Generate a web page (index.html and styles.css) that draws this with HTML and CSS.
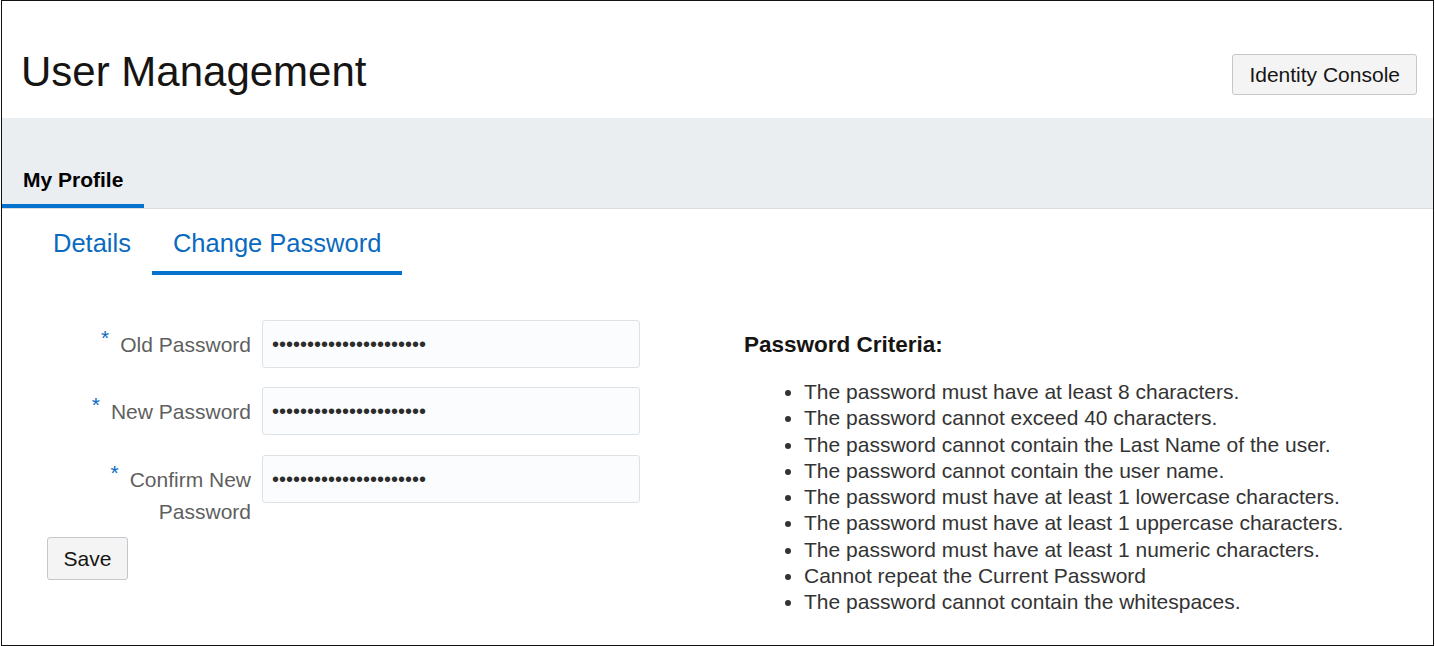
FILE: index.html
```html
<!DOCTYPE html>
<html lang="en">
<head>
<meta charset="utf-8">
<title>User Management</title>
<link rel="stylesheet" href="styles.css">
</head>
<body>
<div class="frame">
  <header class="header">
    <h1 class="title">User Management</h1>
    <button class="btn btn-console" type="button">Identity Console</button>
  </header>

  <nav class="band">
    <div class="band-tab">My Profile</div>
  </nav>

  <div class="subtabs">
    <div class="subtab">Details</div>
    <div class="subtab subtab-active">Change Password</div>
  </div>

  <main class="content">
    <form class="form">
      <div class="row">
        <label class="label"><span class="req">*</span>Old Password</label>
        <input class="field" type="password" value="aaaaaaaaaaaaaaaaaaaaaa">
      </div>
      <div class="row">
        <label class="label"><span class="req">*</span>New Password</label>
        <input class="field" type="password" value="aaaaaaaaaaaaaaaaaaaaaa">
      </div>
      <div class="row">
        <label class="label"><span class="req">*</span>Confirm New Password</label>
        <input class="field" type="password" value="aaaaaaaaaaaaaaaaaaaaaa">
      </div>
      <button class="btn btn-save" type="button">Save</button>
    </form>

    <section class="criteria">
      <h2 class="criteria-title">Password Criteria:</h2>
      <ul class="criteria-list">
        <li>The password must have at least 8 characters.</li>
        <li>The password cannot exceed 40 characters.</li>
        <li>The password cannot contain the Last Name of the user.</li>
        <li>The password cannot contain the user name.</li>
        <li>The password must have at least 1 lowercase characters.</li>
        <li>The password must have at least 1 uppercase characters.</li>
        <li>The password must have at least 1 numeric characters.</li>
        <li>Cannot repeat the Current Password</li>
        <li>The password cannot contain the whitespaces.</li>
      </ul>
    </section>
  </main>
</div>
</body>
</html>
```

FILE: styles.css
```css
* {
  box-sizing: border-box;
}

html, body {
  margin: 0;
  padding: 0;
  background: #ffffff;
}

body {
  font-family: "Liberation Sans", Arial, sans-serif;
  color: #161513;
}

.frame {
  margin-left: 1px;
  width: 1433px;
  height: 646px;
  border: 1px solid #111111;
  overflow: hidden;
  background: #ffffff;
}

/* Header */
.header {
  height: 117px;
  display: flex;
  align-items: flex-end;
  justify-content: space-between;
  padding: 0 16px 23px 19px;
}

.title {
  margin: 0;
  font-size: 42px;
  font-weight: normal;
  line-height: 47px;
  color: #161513;
}

.btn {
  font-family: "Liberation Sans", Arial, sans-serif;
  font-size: 21px;
  color: #161513;
  background: #f4f4f5;
  border: 1px solid #c4c8cc;
  border-radius: 3px;
  cursor: pointer;
}

.btn-console {
  height: 41px;
  padding: 0 16px;
}

/* Gray band */
.band {
  height: 91px;
  background: #ebeef1;
  border-bottom: 1px solid #d9dde1;
  display: flex;
  align-items: flex-end;
}

.band-tab {
  font-size: 21px;
  font-weight: bold;
  line-height: 24px;
  color: #000000;
  padding: 0 21px 12px 21px;
  border-bottom: 4px solid #0572ce;
}

/* Sub tabs */
.subtabs {
  display: flex;
  margin-top: 19px;
  padding-left: 30px;
}

.subtab {
  font-size: 25.5px;
  line-height: 30px;
  color: #0a6ac0;
  padding: 0 21px 13px;
  border-bottom: 4px solid transparent;
}

.subtab-active {
  border-bottom-color: #0572ce;
}

/* Content */
.content {
  display: flex;
  align-items: flex-start;
  padding: 45px 0 0 45px;
}

.form {
  width: 593px;
  margin: 0;
}

.row {
  display: flex;
  align-items: flex-start;
}

.row + .row {
  margin-top: 19px;
}

.row:nth-child(3) {
  margin-top: 20px;
}

.label {
  width: 204px;
  margin-right: 11px;
  padding-top: 9px;
  text-align: right;
  font-size: 21px;
  line-height: 32px;
  color: #5f5f5f;
}

.req {
  color: #0a6ac0;
  font-size: 21px;
  vertical-align: 7px;
  line-height: 0;
  margin-right: 11px;
}

.field {
  width: 378px;
  height: 48px;
  flex: none;
  padding: 0 9px;
  font-family: "Liberation Sans", Arial, sans-serif;
  font-size: 20px;
  color: #2c2c2c;
  background: #fbfcfd;
  border: 1px solid #dde2e6;
  border-radius: 3px;
  outline: none;
}

.btn-save {
  display: block;
  margin-top: 9px;
  height: 43px;
  width: 81px;
  padding: 0;
}

.criteria {
  margin-left: 104px;
}

.criteria-title {
  margin: 11px 0 0 0;
  font-size: 22.5px;
  line-height: 27px;
  font-weight: bold;
  color: #161513;
}

.criteria-list {
  margin: 21px 0 0 0;
  padding-left: 60px;
  font-size: 21px;
  line-height: 26.25px;
  color: #333333;
}
```
